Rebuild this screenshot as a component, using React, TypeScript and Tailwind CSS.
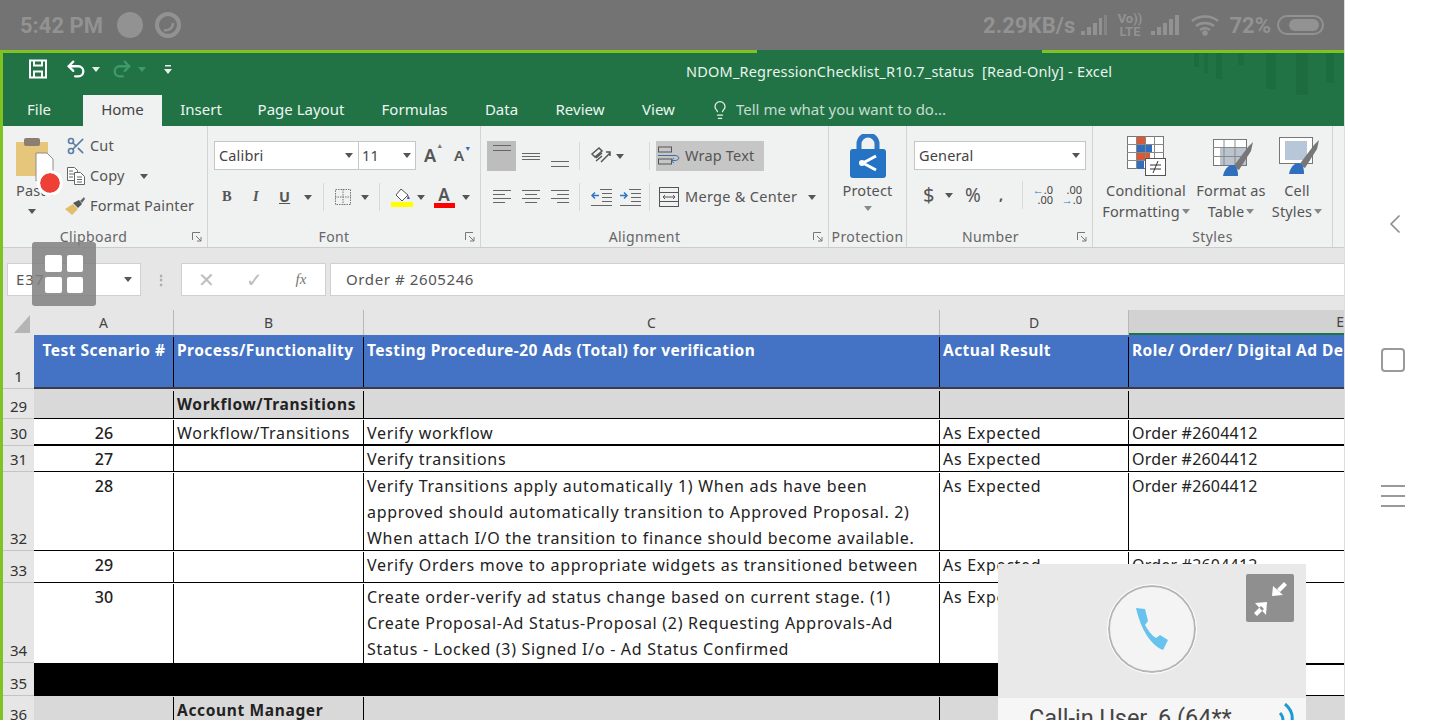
import React from 'react';
import { Undo2, Redo2, Scissors, Lightbulb, ChevronLeft } from 'lucide-react';

const Caret = ({ className = 'text-[#555]' }: { className?: string }) => (
  <svg width="8" height="5" viewBox="0 0 8 5" className={className}>
    <path d="M0 0h8L4 5z" fill="currentColor" />
  </svg>
);

const Lines = ({ rows, align }: { rows: { y: number; w: number }[]; align: 'l' | 'c' | 'r' }) => (
  <svg width="20" height="24" viewBox="0 0 20 24" className="text-[#666]">
    {rows.map((r, i) => {
      const x = align === 'l' ? 1 : align === 'r' ? 19 - r.w : 10 - r.w / 2;
      return <rect key={i} x={x} y={r.y} width={r.w} height="1" fill="currentColor" />;
    })}
  </svg>
);

const TitleStreaks = () => (
  <svg width="150" height="42" viewBox="0 0 150 42" className="absolute right-0 top-0 text-[#1d6c3f]">
    <path d="M0 0h5v14H0zM10 0h4v20h-4zM22 0h6v26h-6zM44 0h6v12h-6zM72 0h10v36H72zM102 0h12v42h-12zM132 0h8v30h-8z" fill="currentColor" />
  </svg>
);

const PasteIcon = () => (
  <svg width="38" height="46" viewBox="0 0 38 46">
    <rect x="0" y="7" width="32" height="34" rx="1" fill="#e6c67a" />
    <rect x="8" y="3" width="16" height="8" rx="2" fill="#8a7f70" />
    <path d="M20 18h11l6 6v22H20z" fill="#fff" stroke="#8d8d8d" />
  </svg>
);

const CopyIcon = () => (
  <svg width="20" height="20" viewBox="0 0 20 20" fill="#fff" stroke="#666">
    <path d="M1.500 1.500h7l3 3v10h-10z" />
    <path d="M8.500 6.500h6l4 4v8h-10z" />
    <path d="M3 5h4M3 8h5M3 11h4M11 11h5M11 13.500h5M11 16h5" fill="none" />
  </svg>
);

const BrushIcon = () => (
  <svg width="22" height="20" viewBox="0 0 22 20">
    <path d="M0 13l8-5 5 5-6 6c-2-2-5-4-7-6z" fill="#e3bd6c" />
    <path d="M8 7l6-3 3 4-4 4z" fill="#555" />
    <path d="M15 5l4-4 1 2-3 4z" fill="#666" />
  </svg>
);

const BorderIcon = () => (
  <svg width="16" height="16" viewBox="0 0 16 16" fill="none" stroke="#777" strokeDasharray="1.500 1">
    <rect x="0.500" y="0.500" width="15" height="15" />
    <path d="M8 0v16M0 8h16" />
  </svg>
);

const FillIcon = () => (
  <span className="flex flex-col items-center">
    <svg width="20" height="14" viewBox="0 0 20 14" fill="none">
      <path d="M9 1l7 6-6 6-6-6z" fill="#fff" stroke="#555" />
      <path d="M16 7l2 4-3 0z" fill="#4b57b5" />
    </svg>
    <span className="w-[22px] h-[5px] bg-[#ffff00]" />
  </span>
);

const ProtectIcon = () => (
  <svg width="36" height="44" viewBox="0 0 36 44">
    <path d="M9 16v-6a9 9 0 0 1 18 0v6" fill="none" stroke="#2d76c4" strokeWidth="5" />
    <rect x="0" y="15" width="36" height="29" rx="3" fill="#2473c5" />
    <path d="M26 22l-13 7 13 7" fill="none" stroke="#fff" strokeWidth="3" />
    <circle cx="12" cy="29" r="3" fill="#fff" />
  </svg>
);

const CondFormatIcon = () => (
  <svg width="40" height="42" viewBox="0 0 40 42">
    <g fill="#fff" stroke="#777">
      <rect x="0.500" y="0.500" width="36" height="32" />
    </g>
    <rect x="10" y="1" width="8" height="7" fill="#d95b36" />
    <rect x="10" y="9" width="15" height="7" fill="#2f6fbd" />
    <rect x="10" y="17" width="13" height="7" fill="#d95b36" />
    <rect x="10" y="25" width="7" height="8" fill="#2f6fbd" />
    <path d="M9.500 0v33M18.500 0v33M27.500 0v33M0 8.500h37M0 16.500h37M0 24.500h37" stroke="#888" fill="none" />
    <rect x="18.500" y="22.500" width="20" height="17" fill="#fff" stroke="#555" />
    <path d="M23 29h11M23 33h11M31 25l-5 12" stroke="#333" fill="none" />
  </svg>
);

const TableBrushIcon = ({ cell }: { cell?: boolean }) => (
  <svg width="40" height="38" viewBox="0 0 40 38">
    <rect x="0.500" y="0.500" width="33" height="26" fill="#fff" stroke="#777" />
    {cell ? (
      <rect x="6" y="4" width="22" height="19" fill="#b8c6da" />
    ) : (
      <>
        <rect x="7" y="8" width="26" height="18" fill="#b9c4cf" />
        <path d="M0 8.500h33M0 17.500h33M11 0v26M22 0v26" stroke="#8a8a8a" fill="none" />
      </>
    )}
    <path d="M20 28l15-20 5-5-2 9-12 19z" fill="#777" />
    <path d="M10 37c1-6 5-11 9-11 4 0 6 4 6 11z" fill="#2f6fbd" />
  </svg>
);

const RibbonGroup = ({ label, width, labelPad = '', launcher, children }: { label: string; width: string; labelPad?: string; launcher?: boolean; children: React.ReactNode }) => (
  <div className={`${width} relative flex flex-col h-full border-r border-[#d4d4d4] shrink-0`}>
    <div className="flex-1 min-h-0">{children}</div>
    <div className={`h-[20px] text-center text-[14px] leading-[20px] tracking-[0.4px] text-[#666] ${labelPad}`}>{label}</div>
    {launcher && (
      <svg width="10" height="10" viewBox="0 0 10 10" className="absolute right-[5px] bottom-[5px]" fill="none" stroke="#777">
        <path d="M0.500 8V0.500H8M4 4l5 5M9 5v4H5" />
      </svg>
    )}
  </div>
);

const Ribbon = () => (
  <div className="flex h-[122px] shrink-0 bg-[#f0f1f1] border-b border-[#cccccc] pl-[1px] text-[#444] text-[14.500px] tracking-[0.15px]">
    <RibbonGroup label="Clipboard" width="w-[204px]" labelPad="pr-[24px]" launcher>
      <div className="flex">
        <div className="w-[60px] pl-[12px] pt-[9px] flex flex-col">
          <PasteIcon />
          <span className="text-[#555] leading-[18px]">Paste</span>
          <span className="pl-[12px] pt-[10px]"><Caret /></span>
        </div>
        <div className="flex flex-col pt-[5px] pl-[2px] text-[#555]">
          <div className="flex items-center h-[30px] gap-[4px]"><Scissors size={20} className="text-[#5b7ea6]" /><span>Cut</span></div>
          <div className="flex items-center h-[30px] gap-[4px]"><CopyIcon /><span>Copy</span><span className="pl-[11px]"><Caret /></span></div>
          <div className="flex items-center h-[30px] gap-[3px] -ml-[1px]"><BrushIcon /><span>Format Painter</span></div>
        </div>
      </div>
    </RibbonGroup>
    <RibbonGroup label="Font" width="w-[273px]" labelPad="pr-[20px]" launcher>
      <div className="pl-[6px] pt-[15px] flex items-center">
        <div className="w-[145px] h-[29px] bg-white border border-[#c6c6c6] flex items-center justify-between px-[4px] pr-[5px]">
          <span>Calibri</span><Caret />
        </div>
        <div className="w-[57px] h-[29px] bg-white border border-l-0 border-[#c6c6c6] flex items-center justify-between px-[3px] pr-[4px]">
          <span>11</span><Caret />
        </div>
        <span className="ml-[8px] w-[26px] text-[18px] font-semibold text-[#555] flex items-start">A<span className="text-[7px] text-[#777] -mt-[1px]">▲</span></span>
        <span className="ml-[4px] w-[20px] text-[15px] font-semibold text-[#555] flex items-start">A<span className="text-[7px] text-[#2f6fbd]">▼</span></span>
      </div>
      <div className="pl-[13px] pt-[10px] flex items-center h-[44px] text-[#555] font-bold">
        <span className="w-[29px] pl-[1px]" style={{ fontFamily: '"Liberation Serif", serif' }}>B</span>
        <span className="w-[29px] pl-[3px] italic" style={{ fontFamily: '"Liberation Serif", serif' }}>I</span>
        <span className="w-[19px] underline">U</span>
        <span className="w-[25px] pl-[6px]"><Caret /></span>
        <span className="w-px h-[28px] bg-[#d8d8d8]" />
        <span className="ml-[11px] w-[25px]"><BorderIcon /></span>
        <span className="w-[19px] pl-[1px]"><Caret /></span>
        <span className="w-px h-[28px] bg-[#d8d8d8] mr-[9px]" />
        <span className="w-[26px]"><FillIcon /></span>
        <span className="w-[14px] pl-[2px]"><Caret /></span>
        <span className="w-[30px] flex flex-col items-center text-[17px] leading-[17px] text-[#555] font-semibold">A<span className="w-[21px] h-[5px] bg-[#ff0000]" /></span>
        <span className="pl-[3px]"><Caret /></span>
      </div>
    </RibbonGroup>
    <RibbonGroup label="Alignment" width="w-[348px]" labelPad="pr-[20px]" launcher>
      <div className="pl-[6px] pt-[15px] flex items-center h-[45px]">
        <div className="w-[29px] h-[30px] bg-[#bdbdbd] flex justify-center"><Lines rows={[{ y: 4, w: 18 }, { y: 9, w: 18 }]} align="c" /></div>
        <div className="w-[29px] flex justify-center"><Lines rows={[{ y: 9, w: 18 }, { y: 12, w: 18 }, { y: 15, w: 18 }]} align="c" /></div>
        <div className="w-[29px] flex justify-center"><Lines rows={[{ y: 17, w: 18 }, { y: 22, w: 18 }]} align="c" /></div>
        <span className="w-px h-[28px] bg-[#d8d8d8] ml-[5px]" />
        <span className="w-[45px] pl-[10px] flex items-center gap-[2px] text-[#555] text-[13px]">
          <svg width="24" height="20" viewBox="0 0 24 20" fill="none" stroke="#555" strokeWidth="1.500"><path d="M2 8l7-6 3 3-7 6zM6 12l6-5M6 15l6-5M11 16l9-9M16 6h4v4" /></svg>
          <Caret />
        </span>
        <span className="w-px h-[28px] bg-[#d8d8d8] ml-[24px]" />
        <div className="ml-[6px] w-[108px] h-[30px] bg-[#c6c6c6] flex items-center gap-[4px] px-[2px] text-[#555] whitespace-nowrap">
          <svg width="23" height="20" viewBox="0 0 23 20" fill="none" stroke="#555"><rect x="0.500" y="1" width="13" height="5" /><rect x="0.500" y="13" width="13" height="5" /><path d="M0 9.500h17c5 0 5 5 0 5h-3M16 12l-3 2.500 3 2.500" stroke="#3d6ea8" /></svg>
          <span className="tracking-[0.2px]">Wrap Text</span>
        </div>
      </div>
      <div className="pl-[6px] pt-[11px] flex items-center h-[41px]">
        <div className="w-[29px] flex justify-center"><Lines rows={[{ y: 5, w: 18 }, { y: 9, w: 12 }, { y: 13, w: 18 }, { y: 17, w: 12 }]} align="l" /></div>
        <div className="w-[29px] flex justify-center"><Lines rows={[{ y: 5, w: 18 }, { y: 9, w: 12 }, { y: 13, w: 18 }, { y: 17, w: 12 }]} align="c" /></div>
        <div className="w-[29px] flex justify-center"><Lines rows={[{ y: 5, w: 18 }, { y: 9, w: 12 }, { y: 13, w: 18 }, { y: 17, w: 12 }]} align="r" /></div>
        <span className="w-px h-[28px] bg-[#d8d8d8] ml-[5px]" />
        <span className="w-[61px] pl-[10px] flex gap-[7px]">
          <svg width="22" height="18" viewBox="0 0 22 18" fill="none" stroke="#666"><path d="M10 1.500h12M12 5.500h10M12 9.500h10M12 13.500h10M1 17.500h21" /><path d="M9 7.500H2M5 4.500l-3 3 3 3" stroke="#2d76c4" strokeWidth="1.500" /></svg>
          <svg width="22" height="18" viewBox="0 0 22 18" fill="none" stroke="#666"><path d="M10 1.500h12M12 5.500h10M12 9.500h10M12 13.500h10M1 17.500h21" /><path d="M1 7.500h7M5 4.500l3 3-3 3" stroke="#2d76c4" strokeWidth="1.500" /></svg>
        </span>
        <span className="w-px h-[28px] bg-[#d8d8d8] ml-[8px]" />
        <div className="ml-[7px] flex items-center gap-[6px] px-[2px] text-[#555] whitespace-nowrap">
          <svg width="20" height="20" viewBox="0 0 20 20" fill="none" stroke="#555"><rect x="0.500" y="0.500" width="19" height="19" /><path d="M0 5.500h20M0 14.500h20M4 10h12M6 8l-2 2 2 2M14 8l2 2-2 2" /></svg>
          <span className="tracking-[0.3px]">Merge &amp; Center</span>
          <span className="pl-[5px]"><Caret /></span>
        </div>
      </div>
    </RibbonGroup>
    <RibbonGroup label="Protection" width="w-[78px]">
      <div className="flex flex-col items-center pt-[8px] text-[#555]">
        <ProtectIcon />
        <span className="leading-[20px] pt-[2px]">Protect</span>
        <span className="pt-[6px]"><Caret className="text-[#888]" /></span>
      </div>
    </RibbonGroup>
    <RibbonGroup label="Number" width="w-[186px]" labelPad="pr-[18px]" launcher>
      <div className="pl-[7px] pt-[15px]">
        <div className="w-[172px] h-[29px] bg-white border border-[#c6c6c6] flex items-center justify-between px-[4px] pr-[5px]">
          <span>General</span><Caret />
        </div>
      </div>
      <div className="pl-[16px] pt-[9px] flex items-center h-[41px] text-[#555]">
        <span className="w-[19px] text-[20px]">$</span>
        <span className="w-[19px] pl-[3px]"><Caret /></span>
        <span className="ml-[4px] w-[28px] text-[19px]">%</span>
        <span className="w-[29px] pl-[6px] font-bold">,</span>
        <span className="w-px h-[28px] bg-[#d8d8d8]" />
        <span className="ml-[10px] w-[20px] flex flex-col text-[11px] leading-[10px] items-end text-[#444] tracking-normal"><span><span className="text-[#2d76c4]">←</span>.0</span><span>.00</span></span>
        <span className="ml-[9px] w-[20px] flex flex-col text-[11px] leading-[10px] items-end text-[#444] tracking-normal"><span>.00</span><span><span className="text-[#2d76c4]">→</span>.0</span></span>
      </div>
    </RibbonGroup>
    <RibbonGroup label="Styles" width="w-[240px]">
      <div className="flex pt-[10px] pl-[8px] text-[#555] text-center leading-[21px]">
        <div className="w-[90px] flex flex-col items-center">
          <span className="h-[43px] pl-[2px]"><CondFormatIcon /></span>
          <span className="pt-[1px]">Conditional</span>
          <span className="flex items-center gap-[2px] whitespace-nowrap">Formatting <Caret className="text-[#888]" /></span>
        </div>
        <div className="w-[80px] flex flex-col items-center">
          <span className="h-[43px] pl-[4px] pt-[3px]"><TableBrushIcon /></span>
          <span className="pt-[1px] whitespace-nowrap">Format as</span>
          <span className="flex items-center gap-[2px]">Table <Caret className="text-[#888]" /></span>
        </div>
        <div className="w-[52px] flex flex-col items-center">
          <span className="h-[43px] pl-[3px] pt-[1px]"><TableBrushIcon cell /></span>
          <span className="pt-[1px]">Cell</span>
          <span className="flex items-center gap-[2px]">Styles <Caret className="text-[#888]" /></span>
        </div>
      </div>
    </RibbonGroup>
  </div>
);

const colWidths = ['w-[140px]', 'w-[190px]', 'w-[576px]', 'w-[189px]', 'flex-1'];

const Order = () => <span className="tracking-[0.2px]">Order #2604412</span>;

const SheetRow = ({ num, h, bg, border, cells, top = 'pt-[1px]', numBorder = 'border-b border-[#c4c4c4]' }: { num: string; h: string; bg: string; border: string; cells: React.ReactNode[]; top?: string; numBorder?: string }) => (
  <div className={`flex shrink-0 ${h}`}>
    <div className={`w-[31px] shrink-0 bg-[#e6e6e6] flex items-end justify-center pb-[2px] text-[#333] text-[15px] leading-[20px] tracking-normal ${numBorder}`}>{num}</div>
    <div className={`flex-1 flex ${bg} ${top} ${border} min-w-0 overflow-hidden`}>
      {cells.map((c, i) => (
        <div
          key={i}
          className={`${colWidths[i]} shrink-0 whitespace-pre-line pl-[3px] ${i === 0 ? 'text-center pl-0 pr-[2px] font-medium tracking-normal' : ''} ${i === 4 ? '' : 'border-r border-black'}`}
        >
          {c}
        </div>
      ))}
    </div>
  </div>
);

const Sheet = () => (
  <div className="shrink-0 text-[16px] leading-[26px] text-[#222] tracking-[0.7px]" style={{ fontFamily: '"Noto Sans", sans-serif' }}>
    <div className="flex h-[39px] pt-[14px] bg-[#e6e6e6] text-[14px] text-[#444] tracking-normal">
      <div className="w-[31px] shrink-0 relative">
        <svg width="16" height="18" viewBox="0 0 16 18" className="absolute left-[11px] top-[5px]"><path d="M16 0v18H0z" fill="#b5b5b5" /></svg>
      </div>
      <div className="w-[140px] border-r border-[#b8b8b8] text-center leading-[25px]">A</div>
      <div className="w-[190px] border-r border-[#b8b8b8] text-center leading-[25px]">B</div>
      <div className="w-[576px] border-r border-[#b8b8b8] text-center leading-[25px]">C</div>
      <div className="w-[189px] border-r border-[#b8b8b8] text-center leading-[25px]">D</div>
      <div className="flex-1 bg-[#d2d2d2] text-right leading-[23px] border-b-2 border-[#217346] overflow-hidden">E</div>
    </div>
    <SheetRow
      num="1" h="h-[54px]" bg="bg-[#4472c4] text-white font-bold text-[15.500px] tracking-[0.45px]" border="border-b-2 border-[#3a3a4a]"
      cells={[<span className="tracking-[0.45px] font-bold">Test Scenario #</span>, 'Process/Functionality', 'Testing Procedure-20 Ads (Total) for verification', 'Actual Result', 'Role/ Order/ Digital Ad De']}
      top="pt-[2px]"
    />
    <SheetRow num="29" h="h-[30px]" bg="bg-[#d9d9d9] font-bold text-[15.500px] tracking-[0.65px]" border="border-b border-black" cells={['', 'Workflow/Transitions', '', '', '']} top="pt-[2px]" />
    <SheetRow num="30" h="h-[27px]" bg="bg-white" border="border-b-2 border-black" cells={['26', 'Workflow/Transitions', 'Verify workflow', 'As Expected', <Order />]} />
    <SheetRow num="31" h="h-[26px]" bg="bg-white" border="border-b border-black" top="pt-0" cells={['27', '', 'Verify transitions', 'As Expected', <Order />]} />
    <SheetRow
      num="32" h="h-[79px]" bg="bg-white" border="border-b border-black"
      cells={['28', '', 'Verify Transitions apply automatically 1) When ads have been\napproved should automatically transition to Approved Proposal. 2)\nWhen attach I/O the transition to finance should become available.', 'As Expected', <Order />]}
    />
    <SheetRow num="33" h="h-[32px]" bg="bg-white" border="border-b border-black" cells={['29', '', 'Verify Orders move to appropriate widgets as transitioned between', 'As Expected', <Order />]} />
    <SheetRow
      num="34" h="h-[80px]" bg="bg-white" border=""
      cells={['30', '', 'Create order-verify ad status change based on current stage. (1)\nCreate Proposal-Ad Status-Proposal (2) Requesting Approvals-Ad\nStatus - Locked (3) Signed I/o - Ad Status Confirmed', 'As Expected', '']}
    />
    <div className="flex h-[33px]">
      <div className="w-[31px] shrink-0 bg-[#e6e6e6] flex items-end justify-center pb-[2px] text-[#333] text-[15px] leading-[20px] tracking-normal border-b border-[#c4c4c4]">35</div>
      <div className="w-[1095px] bg-black" />
      <div className="flex-1 bg-white border-t-2 border-b border-black" />
    </div>
    <SheetRow num="36" h="h-[30px]" bg="bg-[#d9d9d9] font-bold text-[15.500px] tracking-[0.65px]" border="" numBorder="" cells={['', 'Account Manager', '', '', '']} />
  </div>
);

const StatusBar = () => (
  <div className="h-[50px] shrink-0 bg-[#737373] flex items-center justify-between pl-[20px] pr-[20px] text-[#929292] font-bold text-[22px]" style={{ fontFamily: 'Roboto, sans-serif' }}>
    <div className="flex items-center gap-[12px]">
      <span className="mr-[2px]">5:42 PM</span>
      <span className="w-[26px] h-[26px] rounded-full bg-[#929292]" />
      <svg width="26" height="26" viewBox="0 0 26 26" fill="none" stroke="#929292">
        <circle cx="13" cy="13" r="11" strokeWidth="4" />
        <path d="M9 18c5 1 9-2 9-7" strokeWidth="2.500" />
      </svg>
    </div>
    <div className="flex items-center gap-[6px]">
      <span className="tracking-[0.1px]">2.29KB/s</span>
      <svg width="26" height="20" viewBox="0 0 26 20" fill="#929292"><path d="M0 16h4v4H0zM6 12h4v8H6zM12 8h4v12h-4zM18 3h3v17h-3z" /><path d="M23 0h3v20h-3z" fill="#858585" /></svg>
      <span className="flex flex-col items-center text-[13px] leading-[13px] ml-[5px] mr-[4px] w-[23px]"><span>Vo))</span><span>LTE</span></span>
      <svg width="28" height="20" viewBox="0 0 28 20" fill="#929292"><path d="M0 16h4v4H0zM6 12h4v8H6zM12 8h4v12h-4zM18 4h4v16h-4zM24 0h4v20h-4z" /></svg>
      <svg width="28" height="22" viewBox="0 0 28 22" fill="none" stroke="#929292" strokeWidth="2.500" className="ml-[6px]">
        <path d="M1 7c7-6 19-6 26 0M5 12c5-4 13-4 18 0M9 16c3-2 7-2 10 0" />
        <circle cx="14" cy="19" r="1.500" fill="#929292" />
      </svg>
      <span className="ml-[4px]">72%</span>
      <span className="w-[47px] h-[20px] rounded-full border-2 border-[#929292] flex items-center justify-end pr-[3px]">
        <span className="w-[30px] h-[12px] rounded-[6px] bg-[#929292]" />
      </span>
    </div>
  </div>
);

const CallWidget = () => (
  <div className="absolute left-[998px] top-[564px] w-[308px] h-[156px] overflow-hidden bg-[#e9e9e9] flex flex-col" style={{ fontFamily: 'Roboto, sans-serif' }}>
    <div className="relative h-[134px] shrink-0 flex items-center justify-center pb-[6px] pt-[2px]">
      <div className="w-[88px] h-[88px] rounded-full bg-[#f4f4f4] border-2 border-[#b5b5b5] outline outline-1 outline-white flex items-center justify-center">
        <svg width="32" height="42" viewBox="0 0 32 42">
          <path d="M0 0l9 1 3 12-3 4c3 5 6 10 11 13l4-3 8 5-5 10C15 37 5 22 0 0z" fill="#67c3ee" />
        </svg>
      </div>
      <div className="absolute top-[10px] right-[12px] w-[48px] h-[48px] rounded-[2px] bg-[#8f8f8f]">
        <svg width="48" height="48" viewBox="0 0 48 48" fill="#fff">
          <path d="M26 22l1-10 10 9zM31 15l7-7 3 3-7 7zM21 28l-12 1 11 12zM15 32l3 3-7 7-3-3z" />
        </svg>
      </div>
    </div>
    <div className="flex-1 bg-[#f6f6f6] relative">
      <span className="absolute left-[31px] top-[6px] text-[23.500px] leading-[28px] text-[#444] whitespace-nowrap">Call-in User_6 (64**</span>
      <svg width="15" height="18" viewBox="0 0 15 18" className="absolute left-[281px] top-[5px]" fill="none" stroke="#1c9ad6" strokeWidth="3">
        <path d="M6 1c6 5 8 11 7 17M1 10c2 2 3 5 3 8" />
      </svg>
    </div>
  </div>
);

const Excel = () => (
  <div className="flex-1 min-h-0 border-l-[3px] border-[#7ec322] flex flex-col" style={{ fontFamily: '"Noto Sans", sans-serif' }}>
    <div className="relative h-[42px] bg-[#217346] shrink-0 flex items-start pt-[5px] text-white">
      <TitleStreaks />
      <div className="flex items-center pl-[25px]">
        <svg width="20" height="20" viewBox="0 0 20 20" fill="none" stroke="#fff" strokeWidth="2">
          <path d="M2 1.500h16v17H2z" />
          <path d="M6 1.500v5h8v-5M6 18.500v-6h8v6" />
        </svg>
        <Undo2 size={22} className="ml-[17px] text-white" strokeWidth={2.500} />
        <span className="ml-[5px]"><Caret className="text-[#e8f0ea]" /></span>
        <Redo2 size={22} className="ml-[11px] text-[#3f9a6b]" strokeWidth={2.500} />
        <span className="ml-[5px]"><Caret className="text-[#3f9a6b]" /></span>
        <svg width="8" height="9" viewBox="0 0 8 9" fill="#e8f0ea" className="ml-[18px]"><path d="M1 0h6v1.500H1zM0 4h8L4 9z" /></svg>
      </div>
      <span className="absolute left-[683px] top-[8px] text-[14.500px] leading-[20px] whitespace-nowrap text-[#eaf3ed] tracking-[0.2px]">NDOM_RegressionChecklist_R10.7_status&nbsp; [Read-Only] - Excel</span>
    </div>
    <div className="h-[31px] bg-[#217346] shrink-0 flex items-start text-[15px] leading-[29px] text-[#eef5f0]">
      <span className="w-[80px] text-center pr-[8px]">File</span>
      <span className="w-[79px] h-[31px] bg-[#f0f1f1] text-center text-[#444]">Home</span>
      <span className="w-[78px] text-center">Insert</span>
      <span className="w-[122px] text-center whitespace-nowrap">Page Layout</span>
      <span className="w-[105px] text-center">Formulas</span>
      <span className="w-[69px] text-center">Data</span>
      <span className="w-[88px] text-center">Review</span>
      <span className="w-[69px] text-center">View</span>
      <span className="flex items-center gap-[6px] text-[#c7dccf] h-[29px] pl-[17px] whitespace-nowrap">
        <Lightbulb size={20} className="text-[#e8f0ea]" strokeWidth={1.500} />
        Tell me what you want to do...
      </span>
    </div>
    <Ribbon />
    <div className="h-[48px] shrink-0 bg-[#e6e6e6] pt-[15px] flex text-[15px] text-[#555]">
      <div className="ml-[4px] w-[134px] h-[33px] bg-white border border-[#d0d0d0] flex items-center justify-between pl-[8px] pr-[8px]">
        <span className="tracking-[1px]">E37</span><Caret />
      </div>
      <div className="w-[40px] flex items-center justify-center text-[#aaa] font-bold text-[14px]">⋮</div>
      <div className="w-[145px] h-[33px] bg-white border border-[#d0d0d0] flex items-center text-[#bdbdbd]">
        <span className="w-[48px] text-center text-[20px]">✕</span>
        <span className="w-[48px] text-center text-[20px]">✓</span>
        <span className="w-[46px] text-center italic text-[#777]" style={{ fontFamily: '"Liberation Serif", serif' }}>fx</span>
      </div>
      <div className="flex-1 ml-[4px] h-[33px] bg-white border-y border-l border-[#d0d0d0] flex items-center pl-[15px] tracking-[0.6px]">Order # 2605246</div>
    </div>
    <Sheet />
  </div>
);

const NavBar = () => (
  <div className="w-[96px] shrink-0 h-full bg-white border-l border-[#dddddd] flex flex-col items-center justify-center gap-[112px] text-[#8c8c8c]">
    <ChevronLeft size={32} strokeWidth={1.300} className="ml-[5px] -my-[4px]" />
    <span className="w-[24px] h-[24px] border-2 border-[#9a9a9a] rounded-[4px]" />
    <span className="w-[24px] h-[24px] flex flex-col justify-between py-[1px]">
      <span className="h-[2px] bg-[#9a9a9a]" />
      <span className="h-[2px] bg-[#9a9a9a]" />
      <span className="h-[2px] bg-[#9a9a9a]" />
    </span>
  </div>
);

export default function App() {
  return (
    <div className="relative w-[1440px] h-[720px] overflow-hidden flex bg-white">
      <div className="w-[1344px] h-full flex flex-col shrink-0 overflow-hidden">
        <StatusBar />
        <div className="flex h-[3px] shrink-0">
          <div className="w-[757px] bg-[#7ec322]" />
          <div className="w-[285px] bg-[#217346]" />
          <div className="flex-1 bg-[#7ec322]" />
        </div>
        <Excel />
      </div>
      <NavBar />
      {/* overlays from the screen recorder and the call app */}
      <div className="absolute left-[40px] top-[173px] w-[20px] h-[20px] rounded-full bg-[#ee4035] outline-3 outline-white" />
      <div className="absolute left-[32px] top-[242px] w-[64px] h-[64px] rounded-[3px] bg-[#808080]/85 grid grid-cols-2 gap-[5px] p-[13px]">
        <span className="bg-white rounded-[2px]" />
        <span className="bg-white rounded-[2px]" />
        <span className="bg-white rounded-[2px]" />
        <span className="bg-white rounded-[2px]" />
      </div>
      <CallWidget />
    </div>
  );
}
